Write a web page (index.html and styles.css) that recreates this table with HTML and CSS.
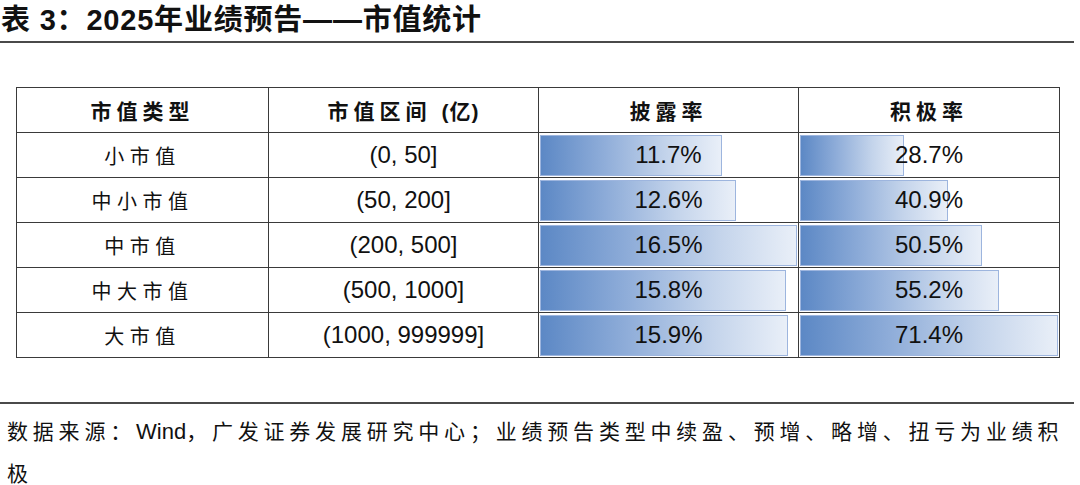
FILE: index.html
```html
<!DOCTYPE html>
<html lang="zh-CN">
<head>
<meta charset="utf-8">
<title>2025年业绩预告——市值统计</title>
<link rel="stylesheet" href="styles.css">
</head>
<body>
<div class="page">
  <h1 class="title">表 3：2025年业绩预告——市值统计</h1>
  <table class="stats">
    <colgroup>
      <col class="c1"><col class="c2"><col class="c3"><col class="c4">
    </colgroup>
    <thead>
      <tr>
        <th>市值类型</th>
        <th>市值区间 <span class="paren">(亿)</span></th>
        <th>披露率</th>
        <th>积极率</th>
      </tr>
    </thead>
    <tbody>
      <tr>
        <td class="cn">小市值</td>
        <td class="num">(0, 50]</td>
        <td class="barcell"><div class="bar-wrap"><div class="bar" style="width:70.9%"></div><span class="val">11.7%</span></div></td>
        <td class="barcell"><div class="bar-wrap"><div class="bar" style="width:40.2%"></div><span class="val">28.7%</span></div></td>
      </tr>
      <tr>
        <td class="cn">中小市值</td>
        <td class="num">(50, 200]</td>
        <td class="barcell"><div class="bar-wrap"><div class="bar" style="width:76.4%"></div><span class="val">12.6%</span></div></td>
        <td class="barcell"><div class="bar-wrap"><div class="bar" style="width:57.3%"></div><span class="val">40.9%</span></div></td>
      </tr>
      <tr>
        <td class="cn">中市值</td>
        <td class="num">(200, 500]</td>
        <td class="barcell"><div class="bar-wrap"><div class="bar" style="width:100%"></div><span class="val">16.5%</span></div></td>
        <td class="barcell"><div class="bar-wrap"><div class="bar" style="width:70.7%"></div><span class="val">50.5%</span></div></td>
      </tr>
      <tr>
        <td class="cn">中大市值</td>
        <td class="num">(500, 1000]</td>
        <td class="barcell"><div class="bar-wrap"><div class="bar" style="width:95.8%"></div><span class="val">15.8%</span></div></td>
        <td class="barcell"><div class="bar-wrap"><div class="bar" style="width:77.3%"></div><span class="val">55.2%</span></div></td>
      </tr>
      <tr>
        <td class="cn">大市值</td>
        <td class="num">(1000, 999999]</td>
        <td class="barcell"><div class="bar-wrap"><div class="bar" style="width:96.4%"></div><span class="val">15.9%</span></div></td>
        <td class="barcell"><div class="bar-wrap"><div class="bar" style="width:100%"></div><span class="val">71.4%</span></div></td>
      </tr>
    </tbody>
  </table>
  <p class="source">数据来源：<span class="latin">Wind</span>，广发证券发展研究中心；业绩预告类型中续盈、预增、略增、扭亏为业绩积极</p>
</div>
</body>
</html>
```

FILE: styles.css
```css
html, body {
  margin: 0;
  padding: 0;
  background: #ffffff;
}

body {
  font-family: "Liberation Sans", "Noto Sans CJK SC", sans-serif;
  color: #111111;
}

.page {
  width: 1080px;
  height: 485px;
  overflow: hidden;
}

.title {
  margin: 0;
  width: 1074px;
  height: 43px;
  padding-left: 1px;
  box-sizing: border-box;
  border-bottom: 2px solid #4a4a4a;
  font-family: "Liberation Sans", "Noto Sans CJK SC", sans-serif;
  font-size: 29px;
  font-weight: 700;
  line-height: 40px;
  letter-spacing: 0.8px;
  color: #111111;
  white-space: nowrap;
}

.stats {
  margin: 44px 0 0 16px;
  border-collapse: collapse;
  table-layout: fixed;
  width: 1043px;
}

.c1 { width: 252px; }
.c2 { width: 270px; }
.c3 { width: 260px; }
.c4 { width: 261px; }

.stats th,
.stats td {
  border: 1px solid #3a3a3a;
  height: 45px;
  padding: 0;
  text-align: center;
  vertical-align: middle;
  box-sizing: border-box;
}

.stats th {
  font-family: "Noto Sans CJK SC", sans-serif;
  font-size: 21px;
  font-weight: 700;
  letter-spacing: 5px;
  color: #111111;
}

.stats th .paren {
  font-family: "Liberation Sans", "Noto Sans CJK SC", sans-serif;
  letter-spacing: 1px;
}

.stats td.cn {
  font-family: "Noto Sans CJK SC", sans-serif;
  font-size: 20px;
  font-weight: 400;
  letter-spacing: 5.5px;
}

.stats td.num {
  font-family: "Liberation Sans", sans-serif;
  font-size: 24px;
}

.stats td.barcell {
  padding: 1px;
}

.bar-wrap {
  display: grid;
  height: 41px;
}

.bar {
  grid-area: 1 / 1;
  justify-self: start;
  height: 41px;
  box-sizing: border-box;
  border: 1px solid #9db5de;
  background: linear-gradient(to right, #5c88c5 0%, #8fadd9 35%, #c4d4eb 70%, #e9eff8 100%);
}

.val {
  grid-area: 1 / 1;
  justify-self: center;
  align-self: center;
  font-family: "Liberation Sans", sans-serif;
  font-size: 24px;
  color: #111111;
}

.source {
  margin: 44px 0 0 0;
  width: 1074px;
  border-top: 2px solid #4a4a4a;
  padding: 6px 0 0 7px;
  box-sizing: border-box;
  font-family: "Noto Sans CJK SC", sans-serif;
  font-size: 21px;
  line-height: 41px;
  letter-spacing: 4.8px;
  color: #111111;
}

.source .latin {
  font-family: "Liberation Sans", sans-serif;
  font-size: 22px;
  letter-spacing: 0;
}
```
